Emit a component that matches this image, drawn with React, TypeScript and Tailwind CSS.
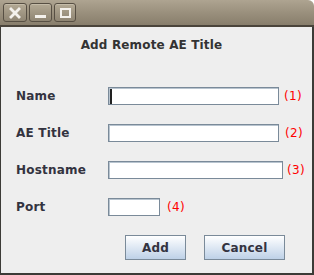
import React from "react";

const font = { fontFamily: '"DejaVu Sans", "Liberation Sans", sans-serif' };

const rows = [
  { label: "Name", width: "w-[171px]", gap: "ml-[5px]", num: "(1)", caret: true },
  { label: "AE Title", width: "w-[171px]", gap: "ml-[6px]", num: "(2)", caret: false },
  { label: "Hostname", width: "w-[175px]", gap: "ml-[4px]", num: "(3)", caret: false },
  { label: "Port", width: "w-[52px]", gap: "ml-[7px]", num: "(4)", caret: false },
];

const WinButton: React.FC<{ w: string; children: React.ReactNode }> = ({ w, children }) => (
  <div
    className={`${w} h-[19px] rounded-[3px] border border-[#574f43] bg-gradient-to-b from-[#b3a994] to-[#8f8573] shadow-[inset_0_1px_0_#c4bba8] flex items-center justify-center`}
  >
    {children}
  </div>
);

export default function App() {
  return (
    <div className="w-[314px] h-[275px] flex flex-col text-[12px]" style={font}>
      {/* TITLE BAR */}
      <div className="h-[27px] shrink-0 rounded-tr-[6px] bg-gradient-to-b from-[#aea491] via-[#9a907d] to-[#887e6c] border-b-2 border-[#4a443b] flex gap-[2px] pl-[3px] pt-[3px]">
        <WinButton w="w-[24px]">
          <svg width="12" height="12" viewBox="0 0 12 12">
            <path d="M2 2 L10 10 M10 2 L2 10" stroke="#f4f1ec" strokeWidth="2.8" strokeLinecap="square" />
          </svg>
        </WinButton>
        <WinButton w="w-[23px]">
          <div className="w-[11px] h-[3px] bg-[#f4f1ec] mt-[7px]" />
        </WinButton>
        <WinButton w="w-[22px]">
          <div className="w-[11px] h-[10px] border-2 border-[#f4f1ec]" />
        </WinButton>
      </div>

      {/* BODY */}
      <div className="flex-1 bg-[#eeeeee] border-l border-r-2 border-b-2 border-[#3c3b37] flex flex-col">
        <div className="pt-[11px] pr-[10px] h-[25px] leading-[14px] text-center font-bold tracking-[0.15px] text-[#333333]">
          Add Remote AE Title
        </div>

        <div className="mt-[35px] pl-[15px] grid grid-cols-[92px_auto] gap-y-[19px]">
          {rows.map((r) => (
            <React.Fragment key={r.label}>
              <div className="h-[18px] leading-[18px] font-bold tracking-[0.2px] text-[#333340]">{r.label}</div>
              <div className="flex items-center h-[18px]">
                <div className={`${r.width} h-[18px] bg-white border border-[#7a8a99] shadow-[inset_1px_1px_0_#b8c4cf] flex items-center`}>
                  {r.caret && <span className="ml-[1px] w-[2px] h-[15px] bg-[#222222]" />}
                </div>
                <span className={`${r.gap} leading-[18px] tracking-[0.3px] text-[#ff0000]`}>{r.num}</span>
              </div>
            </React.Fragment>
          ))}
        </div>

        <div className="mt-[19px] pl-[124px] flex gap-[18px]">
          <button className="w-[61px] h-[25px] border border-[#7a8a99] bg-gradient-to-b from-white to-[#bed1e7] font-bold tracking-[0.2px] text-[#333340]">
            Add
          </button>
          <button className="w-[81px] h-[25px] border border-[#7a8a99] bg-gradient-to-b from-white to-[#bed1e7] font-bold tracking-[0.2px] text-[#333340]">
            Cancel
          </button>
        </div>
      </div>
    </div>
  );
}
